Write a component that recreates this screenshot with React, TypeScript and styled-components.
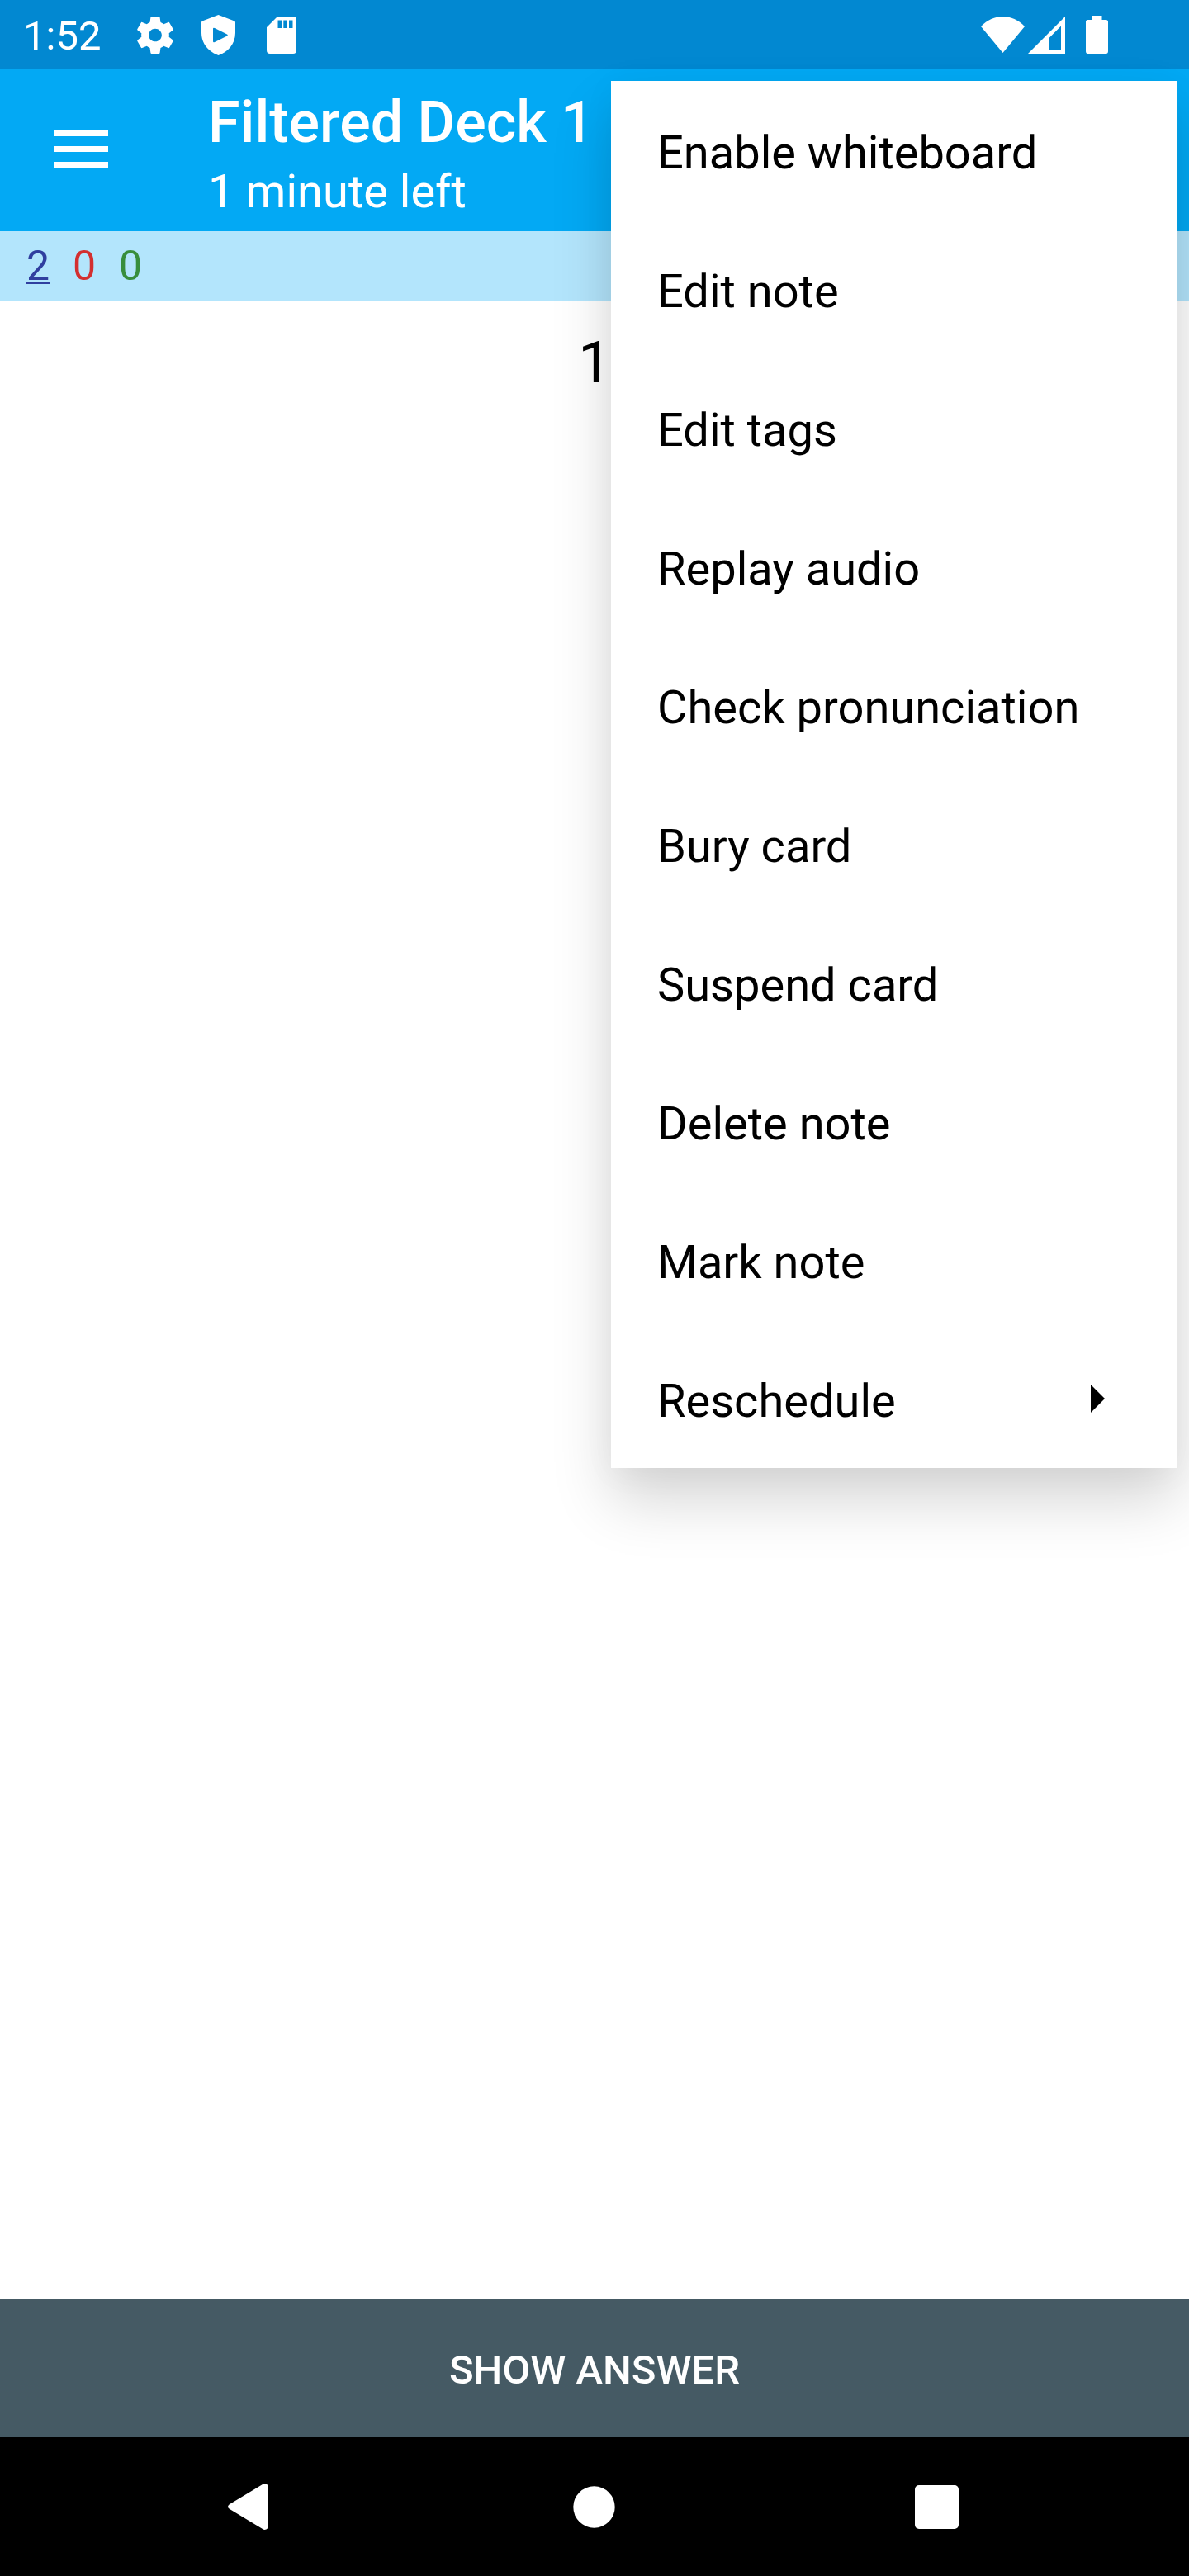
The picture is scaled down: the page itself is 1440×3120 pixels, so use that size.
import React from "react";
import styled, { createGlobalStyle } from "styled-components";

const GlobalStyle = createGlobalStyle`
  html, body { margin: 0; padding: 0; background: #fff; }
  * { box-sizing: border-box; }
`;

const Screen = styled.div`
  position: relative;
  display: flex;
  flex-direction: column;
  width: 1440px;
  height: 3120px;
  overflow: hidden;
  background: #fff;
  color: #000;
  font-family: Roboto, "Noto Sans", sans-serif;
`;

const StatusBar = styled.header`
  display: flex;
  align-items: center;
  height: 84px;
  padding: 0 98px 0 28px;
  background: #0288d1;
  color: #fff;
`;

const Clock = styled.span`
  width: 95px;
  font-size: 49px;
  line-height: 60px;
  padding-top: 4px;
  white-space: nowrap;
`;

const StatusIcons = styled.div<{ $end?: boolean }>`
  display: flex;
  align-items: center;
  margin-left: ${(p) => (p.$end ? "auto" : "43px")};
`;

const Glyph = styled.svg<{ $w: number; $h: number; $gap?: number }>`
  display: block;
  flex: none;
  width: ${(p) => p.$w}px;
  height: ${(p) => p.$h}px;
  margin-left: ${(p) => p.$gap ?? 0}px;
  fill: currentColor;
`;

const Toolbar = styled.div`
  display: flex;
  align-items: center;
  height: 196px;
  padding-left: 65px;
  background: #03a9f4;
  color: #fff;
`;

const MenuButton = styled.button`
  display: flex;
  flex-direction: column;
  justify-content: space-between;
  width: 66px;
  height: 45px;
  margin: 0 121px 3px 0;
  padding: 0;
  border: 0;
  background: none;
`;

const Bar = styled.span`
  height: 7px;
  background: #fff;
`;

const Titles = styled.div`
  display: flex;
  flex-direction: column;
  margin-top: 8px;
`;

const Title = styled.h1`
  margin: 0;
  font-size: 70px;
  font-weight: 500;
  line-height: 82px;
`;

const Subtitle = styled.p`
  margin: 10px 0 0;
  font-size: 56px;
  line-height: 66px;
`;

const Counts = styled.div`
  display: flex;
  align-items: center;
  gap: 28px;
  height: 84px;
  padding: 0 0 0 32px;
  background: #b3e5fc;
`;

const Count = styled.span<{ $color: string; $active?: boolean }>`
  width: 28px;
  color: ${(p) => p.$color};
  font-size: 50px;
  line-height: 58px;
  text-decoration: ${(p) => (p.$active ? "underline" : "none")};
  text-decoration-thickness: 3px;
`;

const Card = styled.main`
  flex: 1;
  padding-top: 34px;
  font-size: 70px;
  line-height: 82px;
  text-align: center;
`;

const AnswerButton = styled.button`
  height: 168px;
  padding: 5px 0 0;
  border: 0;
  background: #455a64;
  color: #fff;
  font: 500 49px/58px Roboto, "Noto Sans", sans-serif;
`;

const NavBar = styled.nav`
  display: flex;
  align-items: center;
  height: 168px;
  padding-left: 276px;
  background: #000;
  color: #fff;
`;

const Popup = styled.ul`
  position: absolute;
  top: 98px;
  left: 740px;
  width: 686px;
  margin: 0;
  padding: 0;
  list-style: none;
  background: #fff;
  box-shadow: 0 40px 68px rgba(0, 0, 0, 0.16), 0 6px 40px rgba(0, 0, 0, 0.04);
`;

const PopupItem = styled.li`
  display: flex;
  align-items: center;
  justify-content: space-between;
  height: 168px;
  padding: 0 88px 0 56px;
  font-size: 56px;
  line-height: 66px;
`;

const Label = styled.span`
  padding-top: 6px;
`;

const actions = [
  "Enable whiteboard",
  "Edit note",
  "Edit tags",
  "Replay audio",
  "Check pronunciation",
  "Bury card",
  "Suspend card",
  "Delete note",
  "Mark note",
  "Reschedule",
];

export default function App() {
  return (
    <>
      <GlobalStyle />
      <Screen>
        <StatusBar>
          <Clock>1:52</Clock>
          <StatusIcons>
            <Glyph $w={44} $h={45} viewBox="2.2 2 19.6 20">
              <path d="M19.43 12.98c.04-.32.07-.64.07-.98s-.03-.66-.07-.98l2.11-1.65c.19-.15.24-.42.12-.64l-2-3.46c-.12-.22-.39-.3-.61-.22l-2.49 1c-.52-.4-1.08-.73-1.69-.98l-.38-2.65C14.46 2.18 14.25 2 14 2h-4c-.25 0-.46.18-.49.42l-.38 2.65c-.61.25-1.17.59-1.69.98l-2.49-1c-.23-.09-.49 0-.61.22l-2 3.46c-.13.22-.07.49.12.64l2.11 1.65c-.04.32-.07.65-.07.98s.03.66.07.98l-2.11 1.65c-.19.15-.24.42-.12.64l2 3.46c.12.22.39.3.61.22l2.49-1c.52.4 1.08.73 1.69.98l.38 2.65c.03.24.24.42.49.42h4c.25 0 .46-.18.49-.42l.38-2.65c.61-.25 1.17-.59 1.69-.98l2.49 1c.23.09.49 0 .61-.22l2-3.46c.12-.22.07-.49-.12-.64l-2.11-1.65zM12 15.5c-1.93 0-3.5-1.57-3.5-3.5s1.57-3.5 3.5-3.5 3.5 1.57 3.5 3.5-1.57 3.5-3.5 3.5z" />
            </Glyph>
            <Glyph $w={41} $h={49} $gap={34} viewBox="0 0 41 49">
              <path fillRule="evenodd" d="M20.5 0 40 7.500Q41 8 41 9V22C41 35 32 45 20.500 49 9 45 0 35 0 22V9Q0 8 1 7.500ZM14 17V32Q14 34 16 33L31 25.500Q32.500 24.500 31 23.500L16 16Q14 15 14 17Z" />
            </Glyph>
            <Glyph $w={36} $h={45} $gap={38} viewBox="0 0 36 45">
              <path fillRule="evenodd" d="M13 0H32Q36 0 36 4V41Q36 45 32 45H4Q0 45 0 41V13ZM13.500 4.500V14H18V4.500ZM20.300 4.500V14H24.500V4.500ZM27 4.500V14H31.500V4.500Z" />
            </Glyph>
          </StatusIcons>
          <StatusIcons $end>
            <Glyph $w={53} $h={44} viewBox="0 0 53 44">
              <path d="M0 12C15-4 38-4 53 12L26.500 44Z" />
            </Glyph>
            <Glyph $w={45} $h={45} $gap={4} viewBox="0 0 45 45">
              <path fillRule="evenodd" d="M45 0V45H0ZM40 11.500 25 26.500V40.500H40Z" />
            </Glyph>
            <Glyph $w={27} $h={46} $gap={25} viewBox="0 0 27 46">
              <path d="M8 0H19.500V5H24.500Q27 5 27 7.500V43Q27 46 24.500 46H2.500Q0 46 0 43V7.500Q0 5 2.500 5H8Z" />
            </Glyph>
          </StatusIcons>
        </StatusBar>
        <Toolbar>
          <MenuButton aria-label="Menu">
            <Bar />
            <Bar />
            <Bar />
          </MenuButton>
          <Titles>
            <Title>Filtered Deck 1</Title>
            <Subtitle>1 minute left</Subtitle>
          </Titles>
        </Toolbar>
        <Counts>
          <Count $color="#303f9f" $active>2</Count>
          <Count $color="#d32f2f">0</Count>
          <Count $color="#388e3c">0</Count>
        </Counts>
        <Card>1</Card>
        <AnswerButton>SHOW ANSWER</AnswerButton>
        <NavBar>
          <Glyph $w={49} $h={56} viewBox="0 0 49 56">
            <path d="M1.800 25.200 42 1Q44-.5 46.500.5 49 1.500 49 4.500V51.500Q49 54.500 46.500 55.500 44 56.500 42 55L1.800 30.800Q-1.800 28 1.800 25.200Z" />
          </Glyph>
          <Glyph $w={51} $h={51} $gap={369} viewBox="0 0 51 51">
            <circle cx="25.5" cy="25.500" r="25.2" />
          </Glyph>
          <Glyph $w={53} $h={53} $gap={363} viewBox="0 0 53 53">
            <rect width="53" height="53" rx="5" />
          </Glyph>
        </NavBar>
        <Popup>
          {actions.map((name) => (
            <PopupItem key={name}>
              <Label>{name}</Label>
              {name === "Reschedule" && (
                <Glyph $w={17} $h={34} viewBox="0 0 17 34">
                  <path d="M0 0 17 17 0 34Z" />
                </Glyph>
              )}
            </PopupItem>
          ))}
        </Popup>
      </Screen>
    </>
  );
}
